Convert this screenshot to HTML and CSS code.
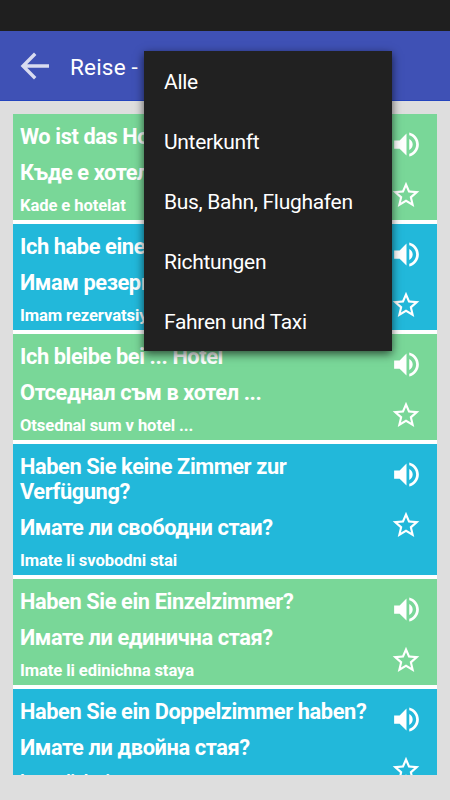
FILE: index.html
```
<!DOCTYPE html>
<html lang="de">
  <head>
    <meta charset="utf-8">
    <title>Reise</title>
    <link rel="stylesheet" href="styles.css">
  </head>
  <body>
    <svg class="defs">
      <symbol id="icon_sound" viewBox="0 0 24 24">
        <path d="M3 9v6h4l5 5V4L7 9H3zm13.5 3c0-1.77-1.02-3.29-2.5-4.03v8.05c1.48-.73 2.5-2.25 2.5-4.02zM14 3.23v2.06c2.89.86 5 3.54 5 6.71s-2.11 5.85-5 6.71v2.06c4.01-.91 7-4.49 7-8.77s-2.99-7.86-7-8.77z"/>
      </symbol>
      <symbol id="icon_star" viewBox="0 0 24 24">
        <path d="M22 9.24l-7.19-.62L12 2 9.19 8.63 2 9.24l5.46 4.73L5.82 21 12 17.27 18.18 21l-1.63-7.03L22 9.24zM12 15.4l-3.76 2.27 1-4.28-3.32-2.88 4.38-.38L12 6.1l1.71 4.04 4.38.38-3.32 2.88 1 4.28L12 15.4z"/>
      </symbol>
    </svg>

    <div class="statusbar"></div>

    <header class="toolbar">
      <svg class="back" viewBox="0 0 30 28">
        <path d="M29 14H3M15.2 1.8L3 14l12.2 12.2"/>
      </svg>
      <h1>Reise -</h1>
    </header>

    <main class="phrases">
      <div class="phrase">
        <div class="text">
          <p>Wo ist das Ho</p>
          <p>Къде е хотел</p>
          <p class="latin">Kade e hotelat</p>
        </div>
        <div class="actions">
          <svg class="sound"><use href="#icon_sound"/></svg>
          <svg class="star"><use href="#icon_star"/></svg>
        </div>
      </div>
      <div class="phrase">
        <div class="text">
          <p>Ich habe eine</p>
          <p>Имам резерв</p>
          <p class="latin">Imam rezervatsiy</p>
        </div>
        <div class="actions">
          <svg class="sound"><use href="#icon_sound"/></svg>
          <svg class="star"><use href="#icon_star"/></svg>
        </div>
      </div>
      <div class="phrase">
        <div class="text">
          <p>Ich bleibe bei ... Hotel</p>
          <p>Отседнал съм в хотел ...</p>
          <p class="latin">Otsednal sum v hotel ...</p>
        </div>
        <div class="actions">
          <svg class="sound"><use href="#icon_sound"/></svg>
          <svg class="star"><use href="#icon_star"/></svg>
        </div>
      </div>
      <div class="phrase">
        <div class="text">
          <p>Haben Sie keine Zimmer zur Verfügung?</p>
          <p>Имате ли свободни стаи?</p>
          <p class="latin">Imate li svobodni stai</p>
        </div>
        <div class="actions">
          <svg class="sound"><use href="#icon_sound"/></svg>
          <svg class="star"><use href="#icon_star"/></svg>
        </div>
      </div>
      <div class="phrase">
        <div class="text">
          <p>Haben Sie ein Einzelzimmer?</p>
          <p>Имате ли единична стая?</p>
          <p class="latin">Imate li edinichna staya</p>
        </div>
        <div class="actions">
          <svg class="sound"><use href="#icon_sound"/></svg>
          <svg class="star"><use href="#icon_star"/></svg>
        </div>
      </div>
      <div class="phrase">
        <div class="text">
          <p>Haben Sie ein Doppelzimmer haben?</p>
          <p>Имате ли двойна стая?</p>
          <p class="latin">Imate li dvoina</p>
        </div>
        <div class="actions">
          <svg class="sound"><use href="#icon_sound"/></svg>
          <svg class="star"><use href="#icon_star"/></svg>
        </div>
      </div>
    </main>

    <ul class="menu">
      <li>Alle</li>
      <li>Unterkunft</li>
      <li>Bus, Bahn, Flughafen</li>
      <li>Richtungen</li>
      <li>Fahren und Taxi</li>
    </ul>
  </body>
</html>
```
FILE: styles.css
```
* {
  box-sizing: border-box;
}

body {
  margin: 0;
  height: 800px;
  overflow: hidden;
  display: flex;
  flex-direction: column;
  background: #dedede;
  color: #fff;
  font-family: Roboto, "Noto Sans", sans-serif;
}

h1, p, ul {
  margin: 0;
  padding: 0;
}

.defs {
  display: none;
}

.statusbar {
  flex: none;
  height: 31px;
  background: #1f1f1f;
}

.toolbar {
  flex: none;
  display: flex;
  align-items: center;
  height: 70px;
  padding-left: 20px;
  background: #3f51b5;
  border-bottom: 1px solid #2545bd;
}

.toolbar h1 {
  margin-left: 20px;
  padding-top: 3px;
  font-size: 22.5px;
  font-weight: 400;
  letter-spacing: .2px;
}

.back {
  width: 30px;
  height: 28px;
  fill: none;
  stroke: #d9dcf0;
  stroke-width: 3.4;
}

.phrases {
  height: 662px;
  margin: 12px 13px 0;
  padding-top: 1px;
  overflow: hidden;
}

.phrase {
  display: flex;
  justify-content: space-between;
  margin-bottom: 4px;
  background: #79d798;
  box-shadow: 0 4px #fff;
}

.phrase:nth-child(even) {
  background: #22b8da;
}

.text {
  width: 362px;
  padding: 10px 0 5px 7px;
  font-size: 21.8px;
  line-height: 25px;
  font-weight: 700;
  letter-spacing: -.4px;
}

.text p + p {
  margin-top: 11px;
}

.text .latin {
  font-size: 16.6px;
  line-height: 19px;
  letter-spacing: -.1px;
}

.actions {
  display: flex;
  flex-direction: column;
  align-items: center;
  gap: 18px;
  width: 34px;
  margin-right: 14px;
  padding-top: 14px;
  fill: #fff;
}

.sound {
  width: 33px;
  height: 33px;
}

.star {
  width: 32px;
  height: 32px;
}

.menu {
  position: absolute;
  left: 144px;
  top: 51px;
  width: 248px;
  height: 300px;
  background: #212121;
  box-shadow: 0 3px 9px rgba(0, 0, 0, .65);
  list-style: none;
}

.menu li {
  height: 60px;
  padding-left: 20px;
  font-size: 21px;
  line-height: 62px;
  letter-spacing: -.3px;
}
```
